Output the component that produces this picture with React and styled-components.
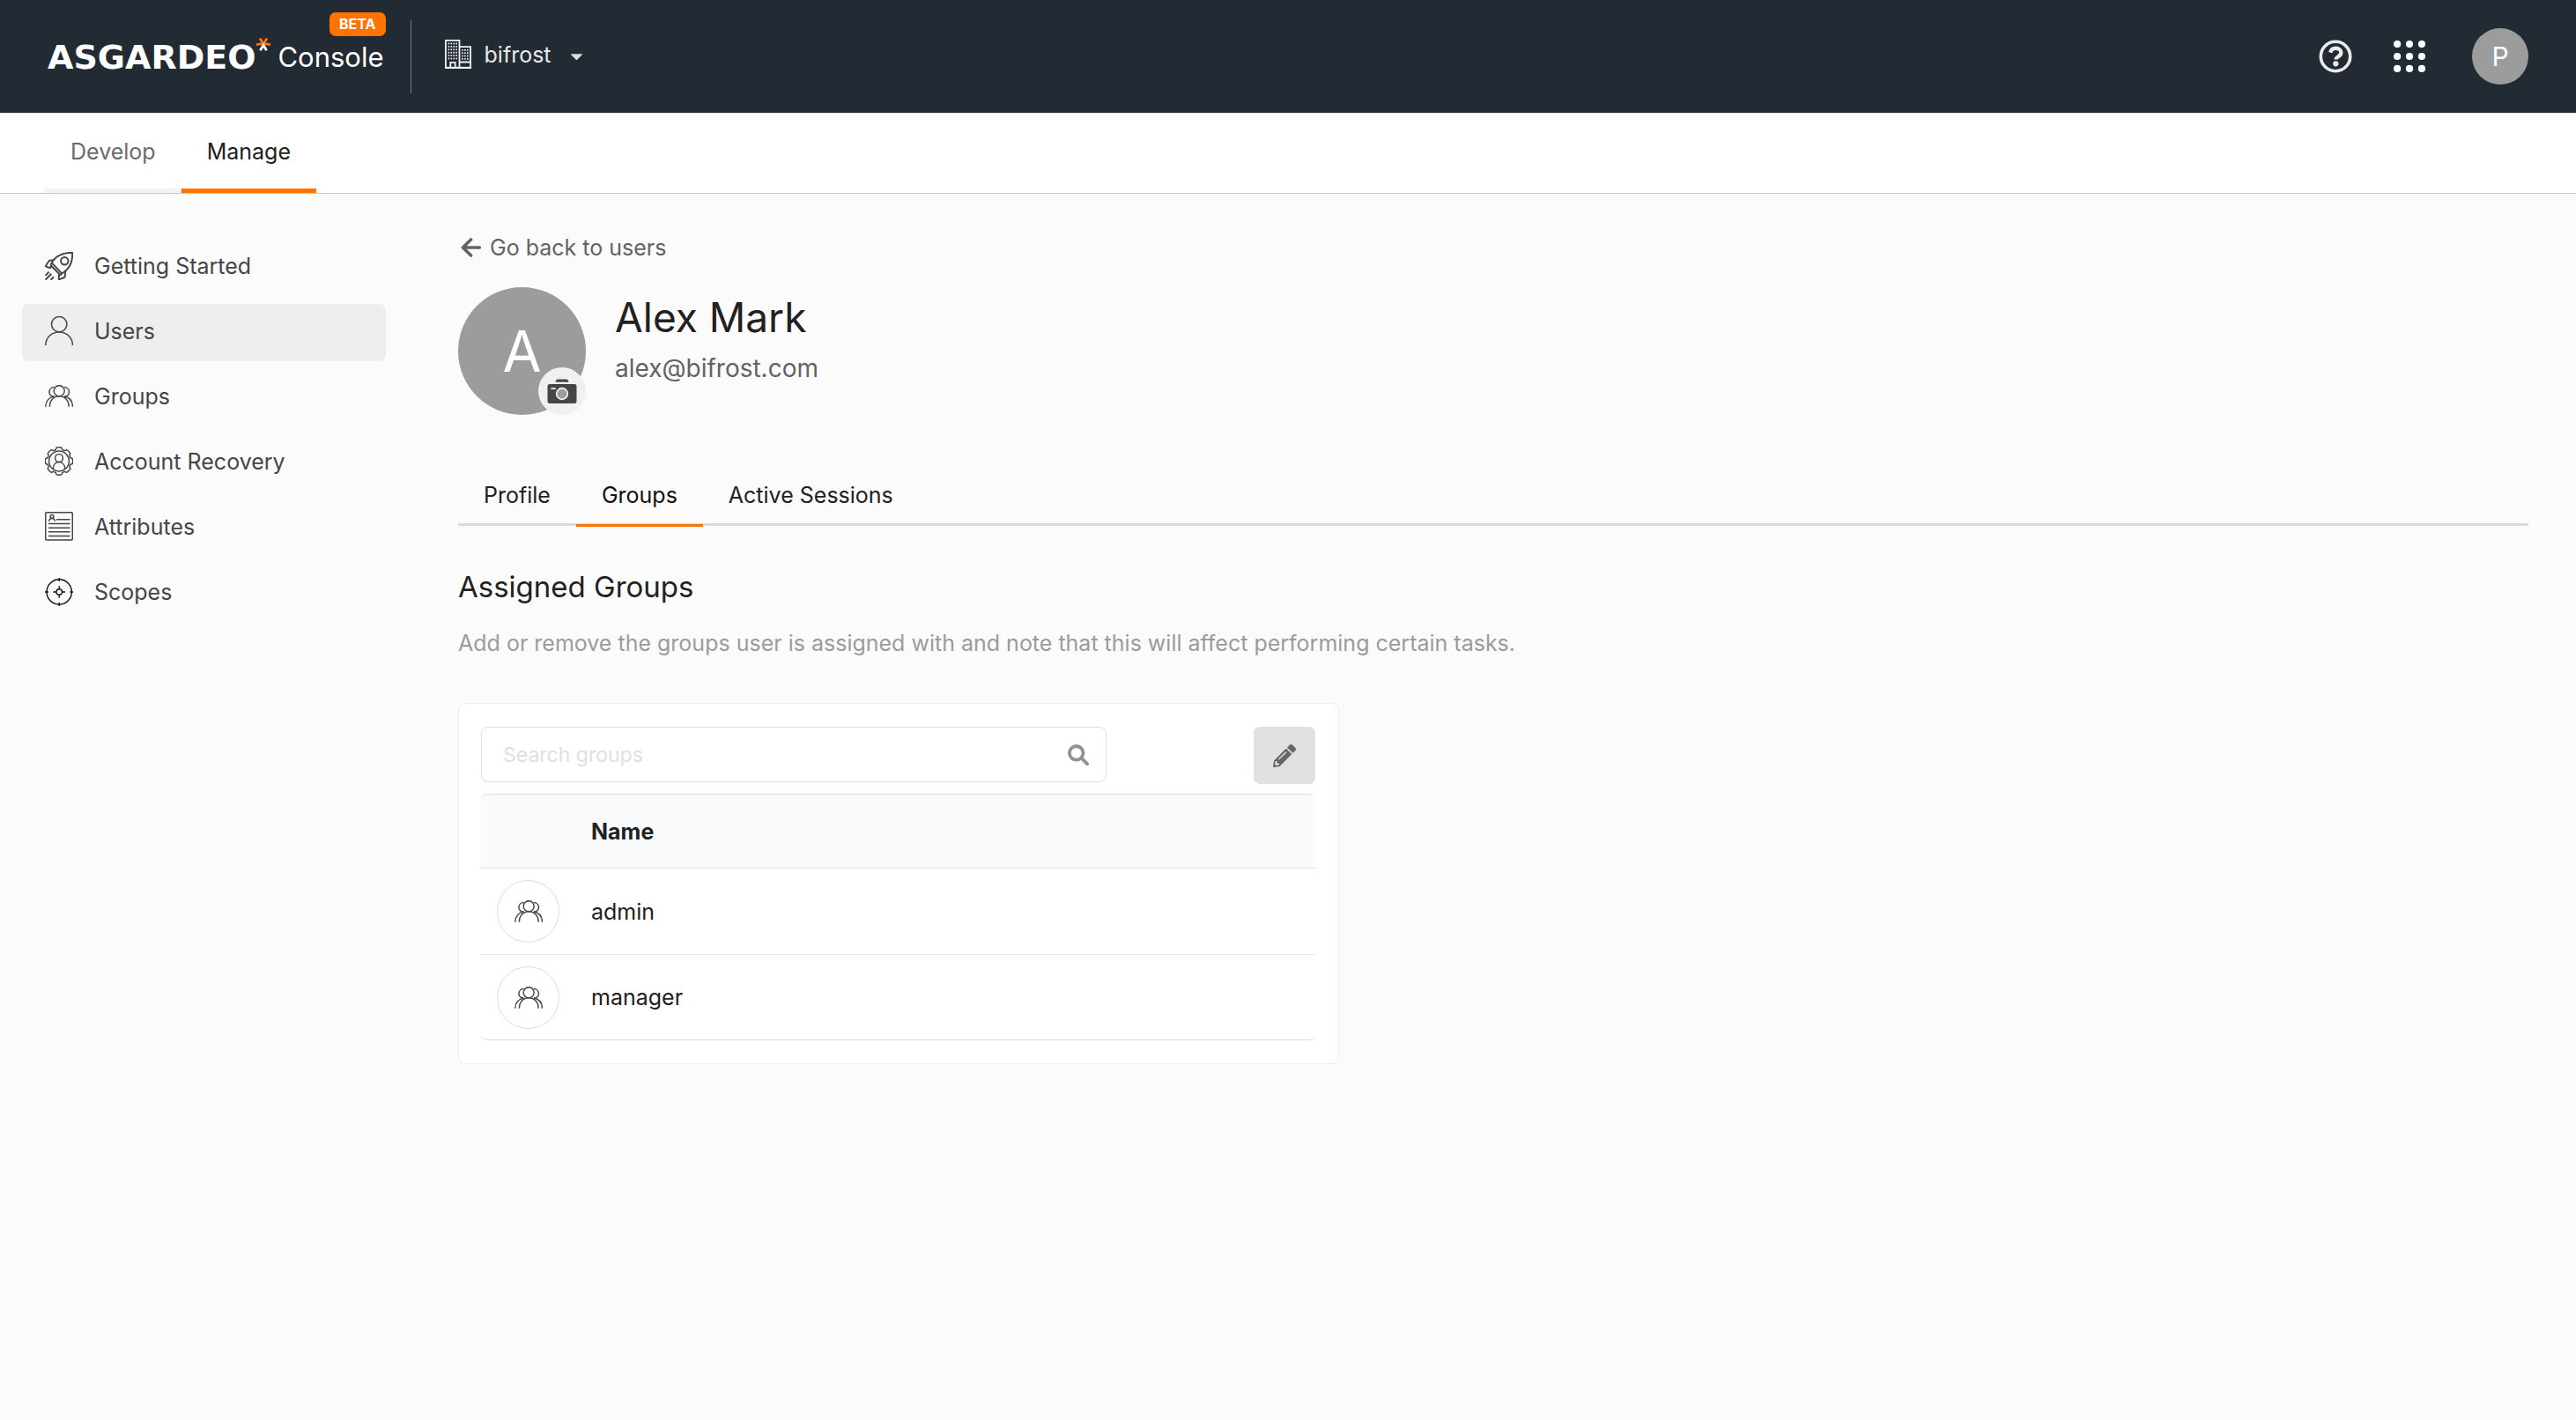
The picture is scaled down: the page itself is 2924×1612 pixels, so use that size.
import React from "react";
import styled, { createGlobalStyle } from "styled-components";

const GlobalStyle = createGlobalStyle`
  *, *::before, *::after { box-sizing: border-box; }
  body {
    margin: 0;
    background: #fbfbfb;
    color: #212121;
    font-family: Inter, "Liberation Sans", sans-serif;
    font-size: 25px;
    line-height: 32px;
  }
  button, input { font: inherit; color: inherit; }
  h1, h2, p, ul { margin: 0; padding: 0; }
  svg { display: block; flex: none; }
`;

/* ---------- Header ---------- */

const Header = styled.header`
  display: flex;
  align-items: center;
  height: 129px;
  padding: 0 54px;
  background: #222a33;
  border-bottom: 1px solid #dcdcdc;
`;

const Brand = styled.a`
  position: relative;
  display: flex;
  align-items: center;
  padding-top: 2px;
  color: #fff;
  text-decoration: none;
`;

const Wordmark = styled.span`
  font-family: "DejaVu Sans", Inter, sans-serif;
  font-size: 38px;
  line-height: 48px;
  font-weight: 700;
`;

const BrandStar = styled.svg`
  align-self: flex-start;
  margin: 2px 7px 0 0;
`;

const Product = styled.span`
  font-size: 31px;
  line-height: 48px;
`;

const Beta = styled.span`
  position: absolute;
  right: -2px;
  bottom: 48px;
  padding: 0 11px;
  border-radius: 7px;
  background: #ff7300;
  font-size: 16px;
  line-height: 27px;
  font-weight: 700;
`;

const Divider = styled.span`
  width: 1px;
  height: 83px;
  margin: 0 38px 0 30px;
  background: #7a7f85;
`;

const Tenant = styled.button`
  display: flex;
  align-items: center;
  padding: 0 0 5px;
  border: 0;
  background: none;
  color: #e8e8e8;
  cursor: pointer;
`;

const TenantName = styled.span`
  margin: 0 22px 0 15px;
`;

const HeaderActions = styled.div`
  display: flex;
  align-items: center;
  margin-left: auto;
`;

const IconButton = styled.button`
  display: flex;
  margin-right: ${(p) => p.$gap}px;
  padding: 0;
  border: 0;
  background: none;
  cursor: pointer;
`;

const AccountButton = styled.button`
  width: 64px;
  height: 64px;
  padding: 0;
  border: 0;
  border-radius: 50%;
  background: #9c9c9c;
  color: #fff;
  font-size: 30px;
  cursor: pointer;
`;

/* ---------- Section tabs ---------- */

const SectionBar = styled.nav`
  display: flex;
  height: 91px;
  padding: 0 51px;
  background: #fff;
  border-bottom: 1px solid #c8c8c8;
`;

const SectionTab = styled.a`
  display: flex;
  align-items: center;
  padding: 0 29px;
  border-bottom: 5px solid ${(p) => (p.$active ? "#ff7300" : "#f3f3f3")};
  color: ${(p) => (p.$active ? "#212121" : "#6b6b6b")};
  text-decoration: none;
`;

/* ---------- Body ---------- */

const Body = styled.div`
  display: flex;
  align-items: flex-start;
`;

const Sidebar = styled.nav`
  flex: none;
  width: 438px;
  padding: 51px 0 0 25px;
`;

const SideList = styled.ul`
  display: grid;
  gap: 9px;
  list-style: none;
`;

const SideLink = styled.a`
  display: flex;
  align-items: center;
  gap: 24px;
  height: 65px;
  padding: 0 26px 4px;
  border-radius: 8px;
  background: ${(p) => (p.$active ? "#eeeeee" : "transparent")};
  color: #464646;
  text-decoration: none;
`;

const Main = styled.main`
  flex: 1;
  min-width: 0;
  padding: 45px 54px 54px 82px;
`;

const BackLink = styled.a`
  display: flex;
  align-items: center;
  gap: 9px;
  width: fit-content;
  padding-left: 3px;
  color: #636363;
  text-decoration: none;
`;

const Profile = styled.section`
  display: flex;
  gap: 33px;
  margin-top: 29px;
`;

const Avatar = styled.div`
  position: relative;
  display: flex;
  align-items: center;
  justify-content: center;
  width: 145px;
  height: 145px;
  border-radius: 50%;
  background: #9c9c9c;
  color: #fff;
  font-size: 64px;
`;

const CameraButton = styled.button`
  position: absolute;
  right: 0;
  bottom: 0;
  display: flex;
  align-items: center;
  justify-content: center;
  width: 54px;
  height: 54px;
  padding: 0;
  border: 0;
  border-radius: 50%;
  background: #f0f0f0;
  cursor: pointer;
`;

const Identity = styled.div`
  padding-top: 4px;
`;

const UserName = styled.h1`
  font-size: 46px;
  line-height: 60px;
  font-weight: 400;
`;

const Email = styled.p`
  margin-top: 10px;
  color: #636363;
  font-size: 28px;
  line-height: 36px;
`;

const Tabs = styled.div`
  display: flex;
  align-items: flex-start;
  height: 69px;
  margin-top: 57px;
  border-bottom: 3px solid #dadada;
`;

const Tab = styled.button`
  height: 70px;
  padding: 0 29px;
  border: 0;
  border-bottom: 3px solid ${(p) => (p.$active ? "#ff7300" : "transparent")};
  background: none;
  color: ${(p) => (p.$active ? "#111" : "#212121")};
  cursor: pointer;
`;

const Heading = styled.h2`
  margin-top: 49px;
  font-size: 33px;
  line-height: 40px;
  font-weight: 400;
`;

const Description = styled.p`
  margin-top: 28px;
  color: #9b9b9b;
`;

const Columns = styled.div`
  display: grid;
  grid-template-columns: 20fr 27fr;
  margin-top: 52px;
`;

const Card = styled.section`
  padding: 26px 26px 26px 25px;
  border: 1px solid #ededed;
  border-radius: 8px;
  background: #fff;
`;

const Toolbar = styled.div`
  display: flex;
  align-items: flex-start;
  justify-content: space-between;
  height: 65px;
`;

const SearchBox = styled.label`
  display: flex;
  align-items: center;
  width: 75%;
  height: 63px;
  padding: 0 19px 0 24px;
  border: 1px solid #dedede;
  border-radius: 8px;
`;

const SearchInput = styled.input`
  flex: 1;
  min-width: 0;
  padding: 0;
  border: 0;
  outline: 0;
  background: none;
  font-size: 23px;
  &::placeholder { color: #e0e0e0; opacity: 1; }
`;

const EditButton = styled.button`
  display: flex;
  align-items: center;
  justify-content: center;
  width: 70px;
  height: 65px;
  padding: 0;
  border: 0;
  border-radius: 7px;
  background: #e0e1e2;
  cursor: pointer;
`;

const TableFrame = styled.div`
  margin-top: 11px;
  border-top: 1px solid #dcdcdc;
  border-bottom: 1px solid #dcdcdc;
  border-radius: 8px;
  overflow: hidden;
`;

const Table = styled.table`
  width: 100%;
  border-collapse: separate;
  border-spacing: 0;
  text-align: left;
  th { height: 84px; padding: 0; background: #f9fafc; font-weight: 700; border-bottom: 1px solid #e2e4e6; }
  td { height: 98px; padding: 0; border-bottom: 1px solid #e6e6e6; }
  tr:last-child td { height: 96px; border-bottom: 0; }
`;

const IconHead = styled.th`
  width: 125px;
`;

const GroupBadge = styled.span`
  display: flex;
  align-items: center;
  justify-content: center;
  width: 71px;
  height: 71px;
  margin-left: 18px;
  border: 1px solid #dcdcdc;
  border-radius: 50%;
`;

/* ---------- Drawings ---------- */

const line = { fill: "none", stroke: "#464646", strokeWidth: 1.5 };

const Star = () => (
  <BrandStar width="18" height="15" viewBox="0 0 18 15" fill="none" strokeWidth="2.8" aria-hidden="true">
    <path d="M5 .6 9 7 13 .6M1 7.6 9 6.4 17 7.6" stroke="#ff7300" />
    <path d="M5.4 14.2 9 8.2 12.6 14.2" stroke="#fff" />
  </BrandStar>
);

const range = (n) => Array.from({ length: n }, (_, i) => i);

const BuildingIcon = () => (
  <svg width="30" height="33" viewBox="0 0 30 33" fill="none" stroke="#f0f0f2" strokeWidth="1.8" aria-hidden="true">
    <path d="M.9 32.1V.9h15.6v31.2zM16.5 8.2h12.6v23.9H16.5M16.5 25.5h12.6M6.3 32v-6.2h5.4V32" />
    <path d="M1 31.8h28" strokeWidth="2" />
    {range(6).map((r) => range(4).map((c) => (
      <rect key={`${r}-${c}`} x={3.6 + c * 2.9} y={3.6 + r * 3.4} width="1.6" height="1.8" fill="#f0f0f2" stroke="none" />
    )))}
    {range(4).map((r) => range(3).map((c) => (
      <rect key={`b${r}-${c}`} x={19.2 + c * 2.9} y={11 + r * 3.3} width="1.6" height="1.8" fill="#f0f0f2" stroke="none" />
    )))}
  </svg>
);

const Caret = () => (
  <svg width="13" height="30" viewBox="0 0 13 30" aria-hidden="true">
    <path d="M.8 14.2h11.4c.6 0 .9.7.5 1.1l-5.5 5.5c-.4.4-1 .4-1.4 0L.3 15.3c-.4-.4-.1-1.1.5-1.1z" fill="#dcdcde" />
  </svg>
);

const HelpIcon = () => (
  <svg width="38" height="38" viewBox="0 0 38 38" fill="none" stroke="#ebebeb" aria-hidden="true">
    <circle cx="19" cy="19" r="16.7" strokeWidth="3.6" />
    <path d="M13.2 14.6C14 11.4 16.2 9.8 19.2 9.8c3.5 0 6.1 2 6.1 5 0 4.6-5.8 4.2-5.8 7.8" strokeWidth="4.4" />
    <circle cx="19.3" cy="27.3" r="3.1" fill="#ebebeb" stroke="none" />
  </svg>
);

const GridIcon = () => (
  <svg width="36" height="36" viewBox="0 0 36 36" fill="#fff" aria-hidden="true">
    {range(9).map((i) => (
      <circle key={i} cx={4.1 + (i % 3) * 13.9} cy={4.1 + Math.floor(i / 3) * 13.9} r="4.1" />
    ))}
  </svg>
);

const RocketIcon = () => (
  <svg width="32" height="32" viewBox="0 0 32 32" {...line} strokeWidth="2" strokeLinejoin="round" aria-hidden="true">
    <path d="M7.3 13C11.5 5 19 .8 31.2.8 31.6 11.5 28.2 19.5 19 24.6L17.6 26.3 6.6 15.2z" />
    <path d="M8 12.6 19.2 24.4" />
    <circle cx="22.3" cy="10.3" r="4.2" />
    <path d="M10.6 9.2 5 9.8C3.6 11.4 1.8 14 .8 16.4L6 18.2 7.6 16M15.8 25.4V31.2C18.4 30.6 20.8 29.8 22.6 28.4L23.2 22" />
    <path d="M.5 26.8 4.6 22.6M.6 31.6 7.4 24.8M6.6 31.6 10 28.2" />
  </svg>
);

const UserIcon = () => (
  <svg width="32" height="33" viewBox="0 0 32 33" {...line} aria-hidden="true">
    <circle cx="16.2" cy="9.1" r="8.7" />
    <path d="M.8 33C.8 24.5 7.5 18 16.2 18S31.4 24.5 31.4 33" />
  </svg>
);

const GroupIcon = () => (
  <svg width="32" height="25" viewBox="0 0 32 25" {...line} aria-hidden="true">
    <circle cx="16.2" cy="6.7" r="6" />
    <path d="M5.4 24.8C5.4 17.6 10 12.8 16.2 12.8S27.2 17.6 27.2 24.8" />
    <path d="M10.6 2.6C7.2 2.6 4.9 5 4.9 8.1 4.9 11 7.2 13 10.2 13.1M21.8 2.6c3.4 0 5.7 2.4 5.7 5.5 0 2.9-2.3 4.9-5.3 5" />
    <path d="M.8 24.8C.8 18.6 4.6 14.2 10.6 13.1M31.4 24.8C31.4 18.6 27.8 14.2 21.8 13.1" />
  </svg>
);

const gearPath = (() => {
  const teeth = 8;
  const at = (r, deg) => {
    const a = (deg * Math.PI) / 180;
    return `${(16 + r * Math.sin(a)).toFixed(2)} ${(16.5 - r * Math.cos(a)).toFixed(2)}`;
  };
  return range(teeth).map((i) => {
    const c = (i * 360) / teeth;
    return `${i ? "L" : "M"}${at(13.6, c - 16)}L${at(15.5, c - 11)}Q${at(16.1, c)} ${at(15.5, c + 11)}L${at(13.6, c + 16)}Q${at(13, c + 22.5)} ${at(13.6, c + 29)}`;
  }).join("") + "Z";
})();

const RecoveryIcon = () => (
  <svg width="32" height="33" viewBox="0 0 32 33" {...line} aria-hidden="true">
    <path d={gearPath} />
    <circle cx="16" cy="16.5" r="11.4" />
    <circle cx="16" cy="13" r="4.4" />
    <path d="M9.2 25.2C9.4 20.6 12.2 17.6 16 17.6S22.6 20.6 22.8 25.2" />
  </svg>
);

const AttributesIcon = () => (
  <svg width="32" height="33" viewBox="0 0 32 33" {...line} aria-hidden="true">
    <rect x=".7" y=".7" width="30.6" height="31.4" rx="1.5" />
    <path d="M13 8.8h15.6M4 13.6h24.6M4 18.2h24.6M4 22.8h24.6M4 27.4h24.6" />
    <circle cx="8" cy="5.4" r="1.9" />
    <path d="M4.6 10.8C4.8 8.6 6.2 7.4 8 7.4S11.2 8.6 11.4 10.8" />
  </svg>
);

const ScopesIcon = () => (
  <svg width="32" height="32" viewBox="0 0 32 32" fill="none" stroke="#111" strokeWidth="1.4" aria-hidden="true">
    <circle cx="16.2" cy="16" r="14.2" />
    <circle cx="16.2" cy="16" r="3.2" />
    <path d="M16.2 0v4M16.2 28v4M0 16h4M28.4 16h3.6M16.2 9.2v3.6M16.2 19.2v3.6M9.4 16H13M19.4 16H23" />
  </svg>
);

const ArrowLeft = () => (
  <svg width="24" height="22" viewBox="0 0 24 22" fill="none" stroke="#636363" strokeWidth="3.6" strokeLinecap="round" strokeLinejoin="round" aria-hidden="true">
    <path d="M11.6 2 2.4 11 11.6 20M3 11H21.4" />
  </svg>
);

const CameraIcon = () => (
  <svg width="34" height="28" viewBox="0 0 34 28" aria-hidden="true">
    <path d="M9.6 3.8C9.8 1.6 10.6.6 12.2.6H21.6C23.2.6 24.2 1.6 24.4 3.8z" fill="#464646" />
    <rect x=".5" y="6" width="33" height="22" rx="2.5" fill="#464646" />
    <circle cx="17" cy="17" r="6.3" fill="#9c9c9c" stroke="#f0f0f0" strokeWidth="1.7" />
    <path d="M5.2 11.2H9" stroke="#f0f0f0" strokeWidth="1.8" strokeLinecap="round" />
  </svg>
);

const SearchIcon = () => (
  <svg width="24" height="24" viewBox="0 0 24 24" fill="none" stroke="#929292" aria-hidden="true">
    <circle cx="9.7" cy="9.8" r="7.8" strokeWidth="3.8" />
    <path d="M16 16.2 22 22.2" strokeWidth="4" strokeLinecap="round" />
  </svg>
);

const PencilIcon = () => (
  <svg width="26" height="26" viewBox="0 0 512 512" fill="#666" aria-hidden="true">
    <path d="M497.900 142.100l-46.100 46.100c-4.700 4.700-12.300 4.700-17 0l-111-111c-4.700-4.700-4.700-12.300 0-17l46.100-46.100c18.700-18.700 49.100-18.700 67.900 0l60.100 60.100c18.800 18.700 18.800 49.100 0 67.900zM284.200 99.800L21.600 362.400.4 483.900c-2.900 16.400 11.400 30.600 27.800 27.800l121.500-21.300 262.600-262.600c4.700-4.700 4.700-12.300 0-17l-111-111c-4.800-4.700-12.400-4.700-17.100 0zM124.100 339.900c-5.500-5.500-5.500-14.300 0-19.800l154-154c5.500-5.500 14.300-5.500 19.800 0s5.500 14.300 0 19.800l-154 154c-5.500 5.500-14.300 5.500-19.800 0zM88 424h48v36.300l-64.500 11.300-31.100-31.100L51.700 376H88v48z" />
  </svg>
);

/* ---------- Page ---------- */

const sections = [
  { label: "Develop" },
  { label: "Manage", active: true },
];

const sideItems = [
  { label: "Getting Started", Icon: RocketIcon },
  { label: "Users", Icon: UserIcon, active: true },
  { label: "Groups", Icon: GroupIcon },
  { label: "Account Recovery", Icon: RecoveryIcon },
  { label: "Attributes", Icon: AttributesIcon },
  { label: "Scopes", Icon: ScopesIcon },
];

const profileTabs = ["Profile", "Groups", "Active Sessions"];
const groups = ["admin", "manager"];

export default function App() {
  return (
    <>
      <GlobalStyle />
      <Header>
        <Brand href="#">
          <Wordmark>ASGARDEO</Wordmark>
          <Star />
          <Product>Console</Product>
          <Beta>BETA</Beta>
        </Brand>
        <Divider />
        <Tenant type="button">
          <BuildingIcon />
          <TenantName>bifrost</TenantName>
          <Caret />
        </Tenant>
        <HeaderActions>
          <IconButton type="button" aria-label="Help" $gap={47}><HelpIcon /></IconButton>
          <IconButton type="button" aria-label="Applications" $gap={53}><GridIcon /></IconButton>
          <AccountButton type="button">P</AccountButton>
        </HeaderActions>
      </Header>

      <SectionBar>
        {sections.map((s) => (
          <SectionTab key={s.label} href="#" $active={s.active}>{s.label}</SectionTab>
        ))}
      </SectionBar>

      <Body>
        <Sidebar>
          <SideList>
            {sideItems.map(({ label, Icon, active }) => (
              <li key={label}>
                <SideLink href="#" $active={active}><Icon />{label}</SideLink>
              </li>
            ))}
          </SideList>
        </Sidebar>

        <Main>
          <BackLink href="#"><ArrowLeft />Go back to users</BackLink>

          <Profile>
            <Avatar>
              A
              <CameraButton type="button" aria-label="Change photo"><CameraIcon /></CameraButton>
            </Avatar>
            <Identity>
              <UserName>Alex Mark</UserName>
              <Email>alex@bifrost.com</Email>
            </Identity>
          </Profile>

          <Tabs role="tablist">
            {profileTabs.map((t) => (
              <Tab key={t} type="button" role="tab" aria-selected={t === "Groups"} $active={t === "Groups"}>{t}</Tab>
            ))}
          </Tabs>

          <Heading>Assigned Groups</Heading>
          <Description>
            Add or remove the groups user is assigned with and note that this will affect performing certain tasks.
          </Description>

          <Columns>
            <Card>
              <Toolbar>
                <SearchBox>
                  <SearchInput type="text" placeholder="Search groups" aria-label="Search groups" />
                  <SearchIcon />
                </SearchBox>
                <EditButton type="button" aria-label="Edit groups"><PencilIcon /></EditButton>
              </Toolbar>
              <TableFrame>
                <Table>
                  <thead>
                    <tr>
                      <IconHead />
                      <th>Name</th>
                    </tr>
                  </thead>
                  <tbody>
                    {groups.map((g) => (
                      <tr key={g}>
                        <td><GroupBadge><GroupIcon /></GroupBadge></td>
                        <td>{g}</td>
                      </tr>
                    ))}
                  </tbody>
                </Table>
              </TableFrame>
            </Card>
          </Columns>
        </Main>
      </Body>
    </>
  );
}
